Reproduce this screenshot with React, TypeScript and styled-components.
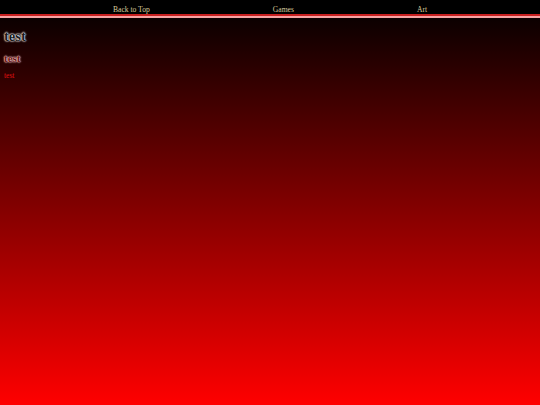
import React from 'react';
import styled, { createGlobalStyle } from 'styled-components';

const GlobalStyle = createGlobalStyle`
  html, body {
    margin: 0;
    padding: 0;
    height: 100%;
  }
  body {
    font-family: "Liberation Serif", "Times New Roman", serif;
    font-size: 7.5px;
    background: linear-gradient(to bottom, #000000 0%, #ff0000 100%);
    background-attachment: fixed;
    min-height: 405px;
  }
`;

const Nav = styled.nav`
  display: flex;
  justify-content: center;
  align-items: center;
  gap: 123px;
  height: 16px;
  padding-top: 4px;
  box-sizing: border-box;
  background: #000;
  border-bottom: 2px solid #c81f1f;
  box-shadow: 0 2px 0 #f6a3a3;
  margin-bottom: 2px;
`;

const NavLink = styled.a`
  color: #d9c99a;
  font-size: 7.6px;
  text-decoration: none;
`;

const Content = styled.main`
  padding: 6px 4px;
`;

const Title = styled.h1`
  margin: 4px 0 0;
  font-size: 14.5px;
  font-weight: bold;
  color: #1c1c1c;
  text-shadow: 0 0 1px #fff, 0 0 2px #fff, 0 0 2px #ddd;
`;

const Subtitle = styled.h2`
  margin: 7px 0 0;
  font-size: 11px;
  font-weight: bold;
  color: #6a1414;
  text-shadow: 0 0 1px #ffe0e0, 0 0 2px #ffcaca, 0 0 2px #fbb;
`;

const Text = styled.p`
  margin: 7px 0 0;
  font-size: 7.5px;
  color: #e01010;
`;

export default function App() {
  return (
    <>
      <GlobalStyle />
      <Nav>
        <NavLink href="#top">Back to Top</NavLink>
        <NavLink href="#games">Games</NavLink>
        <NavLink href="#art">Art</NavLink>
      </Nav>
      <Content>
        <Title>test</Title>
        <Subtitle>test</Subtitle>
        <Text>test</Text>
      </Content>
    </>
  );
}
